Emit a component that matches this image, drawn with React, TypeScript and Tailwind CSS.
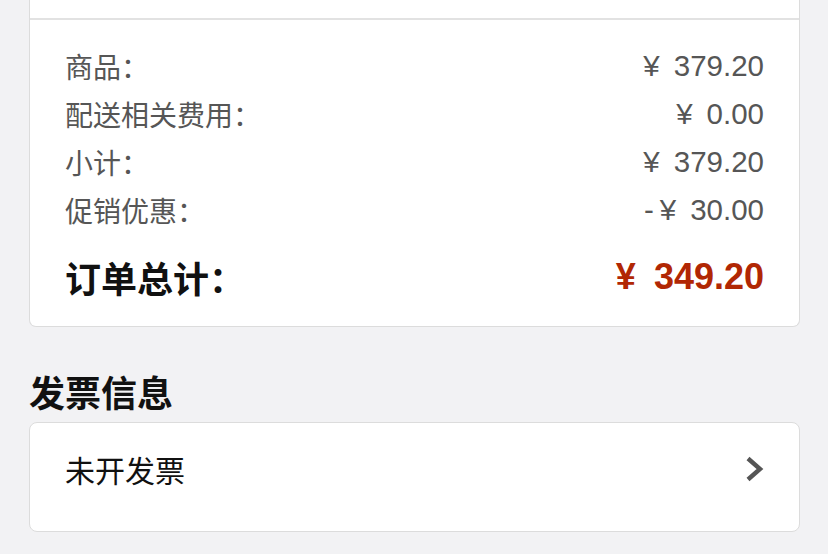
const cjk = "font-['Noto_Sans_CJK_SC',sans-serif]";
const num = "font-['Liberation_Sans','Noto_Sans_CJK_SC',sans-serif]";

type Line = { label: string; value: string; minus?: boolean };

const lines: Line[] = [
  { label: "商品：", value: "379.20" },
  { label: "配送相关费用：", value: "0.00" },
  { label: "小计：", value: "379.20" },
  { label: "促销优惠：", value: "30.00", minus: true },
];

function Amount({ value, minus }: { value: string; minus?: boolean }) {
  return (
    <span className={`${num} flex items-center text-[29.5px] leading-none text-[#565656]`}>
      {minus && <span className="mr-[6px]">-</span>}
      <span>¥</span>
      <span className="ml-[14px]">{value}</span>
    </span>
  );
}

function Chevron() {
  return (
    <svg width="19" height="26" viewBox="0 0 19 26" className="block">
      <polyline
        points="3,2.5 15,13 3,23.5"
        fill="none"
        stroke="#555"
        strokeWidth="4.4"
        strokeLinecap="butt"
        strokeLinejoin="miter"
      />
    </svg>
  );
}

export default function App() {
  return (
    <div className="w-[828px] h-[554px] overflow-hidden bg-[#f2f2f4]">
      {/* order summary card, its upper part scrolled away */}
      <div className="ml-[29px] mr-[28px] bg-white border-x border-b border-[#dcdcdc] rounded-b-[7px]">
        <div className="h-[20px] border-b-2 border-[#e2e2e2]" />
        <div className="pl-[35px] pr-[35px] pt-[22px] pb-[22px]">
          {lines.map((l) => (
            <div key={l.label} className="flex h-[48px] items-center justify-between">
              <span className={`${cjk} text-[28px] leading-none text-[#565656]`}>{l.label}</span>
              <Amount value={l.value} minus={l.minus} />
            </div>
          ))}
          <div className="mt-[16px] flex h-[54px] items-center justify-between">
            <span className={`${cjk} text-[36px] font-bold leading-none text-[#111]`}>订单总计：</span>
            <span className={`${num} flex items-center text-[36px] font-bold leading-none text-[#b12704]`}>
              <span>¥</span>
              <span className="ml-[18px]">349.20</span>
            </span>
          </div>
        </div>
      </div>

      <h2 className={`${cjk} ml-[29px] mt-[42px] h-[44px] flex items-center text-[36px] font-bold leading-none text-[#111]`}>
        发票信息
      </h2>

      <div className="ml-[29px] mr-[28px] mt-[9px] h-[110px] bg-white border border-[#dcdcdc] rounded-[8px]">
        <div className="flex h-[92px] items-center justify-between pl-[35px] pr-[35px]">
          <span className={`${cjk} text-[30px] leading-none text-[#111]`}>未开发票</span>
          <Chevron />
        </div>
      </div>
    </div>
  );
}
